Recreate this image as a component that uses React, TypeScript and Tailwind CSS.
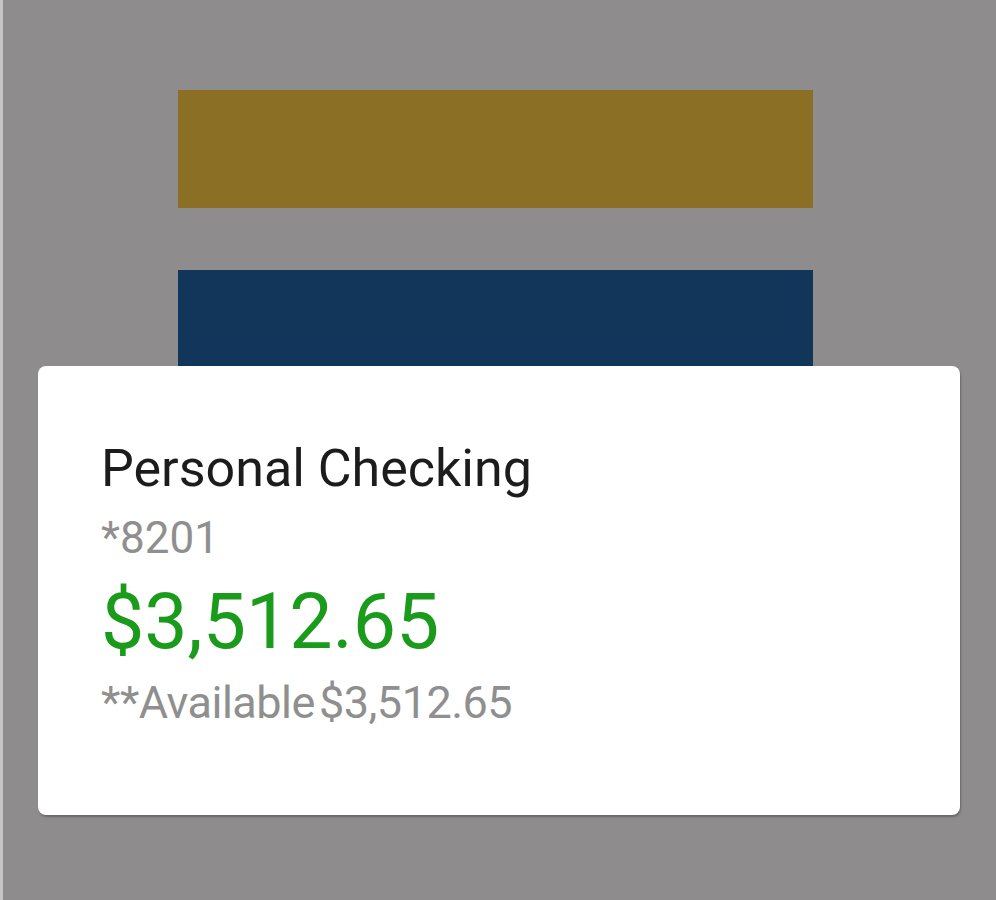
export default function App() {
  return (
    <div
      className="h-[900px] w-[996px] overflow-hidden border-l-[3px] border-[#c6c6c6] bg-[#8e8c8d] pt-[90px]"
      style={{ fontFamily: "Roboto, 'Liberation Sans', sans-serif" }}
    >
      <div className="ml-[175px] h-[118px] w-[635px] bg-[#8a6f24]" />
      <div className="ml-[175px] mt-[62px] h-[96px] w-[635px] bg-[#12365a]" />
      <div className="ml-[35px] h-[449px] w-[922px] rounded-[8px] bg-white px-[63px] pt-[73px] shadow-[1px_2px_2px_rgba(0,0,0,0.25)]">
        <div className="text-[52px] leading-[60px] text-[#1c1c1c]">Personal Checking</div>
        <div className="mt-[14px] text-[44px] leading-[50px] text-[#8f8f8f]">*8201</div>
        <div className="mt-[19px] text-[77px] leading-[80px] text-[#1b9b1b]">$3,512.65</div>
        <div className="mt-[16px] text-[45px] leading-[50px] tracking-[-0.5px] text-[#8f8f8f]">
          **Available<span className="ml-[4px]">$3,512.65</span>
        </div>
      </div>
    </div>
  );
}
